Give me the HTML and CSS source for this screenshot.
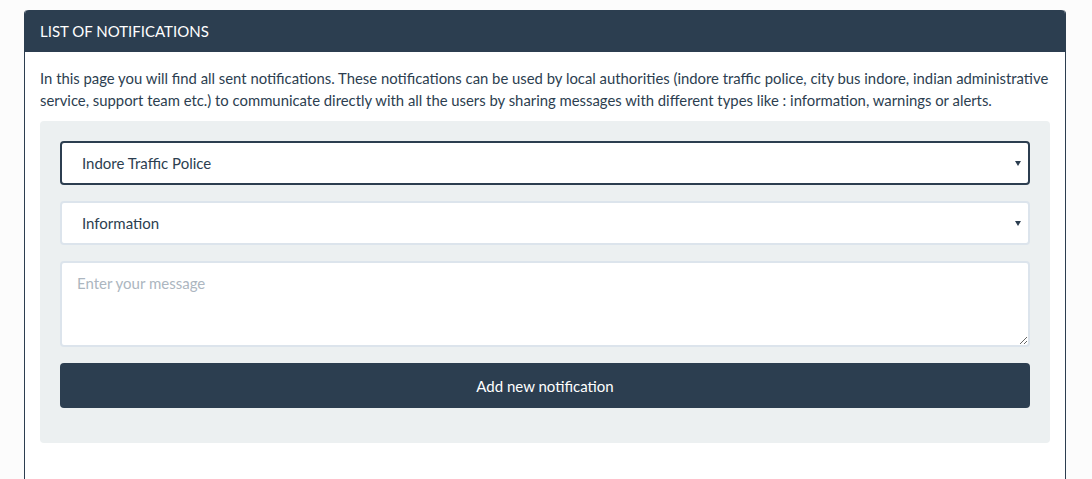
FILE: index.html
```html
<!DOCTYPE html>
<html>
<head>
<meta charset="utf-8">
<link rel="stylesheet" href="styles.css">
</head>
<body>
<div class="page">
  <div class="panel">
    <div class="panel-heading">LIST OF NOTIFICATIONS</div>
    <div class="panel-body">
      <p class="intro">In this page you will find all sent notifications. These notifications can be used by local authorities (indore traffic police, city bus indore, indian administrative service, support team etc.) to communicate directly with all the users by sharing messages with different types like : information, warnings or alerts.</p>
      <form class="well">
        <div class="select-wrap">
          <select class="control control-focus">
            <option>Indore Traffic Police</option>
          </select>
        </div>
        <div class="select-wrap">
          <select class="control">
            <option>Information</option>
          </select>
        </div>
        <textarea class="control message" placeholder="Enter your message"></textarea>
        <button type="button" class="btn">Add new notification</button>
      </form>
    </div>
  </div>
</div>
</body>
</html>
```
FILE: styles.css
```css
html, body {
  margin: 0;
  padding: 0;
  background: #fcfcfc;
  font-family: Lato, "Open Sans", sans-serif;
  color: #2c3e50;
}
.page {
  padding: 10px 26px 0 24px;
  height: 479px;
  box-sizing: border-box;
  overflow: hidden;
}
.panel {
  background: #fff;
  border: 1px solid #2c3e50;
  border-top: none;
  border-radius: 4px 4px 0 0;
  min-height: 520px;
}
.panel-heading {
  background: #2c3e50;
  color: #fff;
  font-size: 15px;
  line-height: 20px;
  padding: 11px 15px 11px 15px;
  border-radius: 4px 4px 0 0;
}
.panel-body {
  padding: 15px 15px;
}
.intro {
  margin: 0 0 10px 0;
  font-size: 14.85px;
  line-height: 22px;
}
.well {
  background: #ecf0f1;
  border-radius: 4px;
  padding: 20px 20px 35px 20px;
  display: flex;
  flex-direction: column;
  gap: 16px;
}
.select-wrap {
  position: relative;
}
.select-wrap::after {
  content: "";
  position: absolute;
  right: 9px;
  top: 20px;
  border-left: 3px solid transparent;
  border-right: 3px solid transparent;
  border-top: 5px solid #2c3e50;
}
.control {
  display: block;
  width: 100%;
  box-sizing: border-box;
  height: 44px;
  border: 2px solid #dce4ec;
  border-radius: 4px;
  background: #fff;
  font-family: Lato, "Open Sans", sans-serif;
  font-size: 15px;
  color: #2c3e50;
  padding: 0 20px;
  -webkit-appearance: none;
  appearance: none;
  outline: none;
}
.control-focus {
  border-color: #2c3e50;
}
.message {
  height: 86px;
  padding: 9px 15px;
  line-height: 22px;
  resize: vertical;
}
.message::placeholder {
  color: #acb6c0;
}
.btn {
  display: block;
  width: 100%;
  height: 45px;
  border: none;
  border-radius: 4px;
  background: #2c3e50;
  color: #fff;
  font-family: Lato, "Open Sans", sans-serif;
  font-size: 15px;
}
```
